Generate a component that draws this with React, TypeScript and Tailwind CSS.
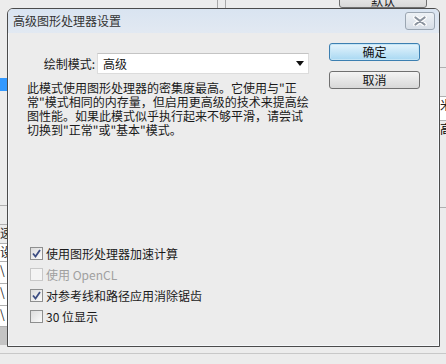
import React from 'react'

const FONT = { fontFamily: '"Noto Sans CJK SC", "Noto Sans", sans-serif' }

function Check({ checked, disabled }: { checked?: boolean; disabled?: boolean }) {
  return (
    <span
      className={
        'flex h-[13px] w-[13px] items-center justify-center border ' +
        (disabled
          ? 'border-[#c8c8c8] bg-[#f4f4f4]'
          : 'border-[#8e8f8f] bg-gradient-to-br from-[#dcdcdc] to-[#fbfbfb]')
      }
    >
      {checked && (
        <svg width="9" height="9" viewBox="0 0 9 9">
          <path d="M1 4.5 L3.5 7.5 L8 1" fill="none" stroke="#3c4d82" strokeWidth="1.8" />
        </svg>
      )}
    </span>
  )
}

function Row({ label, checked, disabled }: { label: string; checked?: boolean; disabled?: boolean }) {
  return (
    <div className="flex h-[21px] items-center gap-[3px]">
      <Check checked={checked} disabled={disabled} />
      <span className={'text-[12px] ' + (disabled ? 'text-[#a0a0a0]' : 'text-[#1a1a1a]')}>{label}</span>
    </div>
  )
}

// narrow cell of the panel table peeking out behind the dialog
function Cell({ h, text, white }: { h: string; text?: string; white?: boolean }) {
  return (
    <div
      className={
        h + ' overflow-hidden border-b border-[#b0b0b0] text-[12px] leading-[16px] text-[#222] ' + (white ? 'bg-white' : '')
      }
    >
      {text}
    </div>
  )
}

export default function App() {
  return (
    <div className="relative h-[364px] w-[446px] overflow-hidden bg-[#ececec]" style={FONT}>
      {/* window behind the dialog */}
      <div className="absolute inset-x-0 top-0 flex h-[8px]">
        <div className="w-[217px]" />
        <div className="w-[9px] border-x border-[#a8a8a8]" />
        <div className="flex flex-1 items-end pl-[113px]">
          <div className="flex h-[18px] w-[88px] items-end justify-center overflow-hidden rounded-[3px] border border-[#707070] bg-gradient-to-b from-[#f2f2f2] to-[#d8d8d8] text-[12px] leading-[12px] text-[#222]">
            默认
          </div>
        </div>
      </div>
      <div className="absolute left-0 top-0 flex h-[354px] w-[7px] flex-col">
        <div className="h-[78px]" />
        <div className="h-[13px] bg-[#3399ff]" />
        <div className="h-[115px] border-b border-[#b0b0b0]" />
        <Cell h="h-[19px]" />
        <Cell h="h-[19px]" text="速" />
        <Cell h="h-[18px]" text="设" white />
        <Cell h="h-[22px]" text="\" white />
        <Cell h="h-[22px]" text="\" white />
        <Cell h="h-[21px]" text="\" white />
        <div className="h-[18px] bg-[#c4c4c4]" />
      </div>
      <div className="absolute right-0 top-0 flex h-[354px] w-[6px] flex-col">
        <div className="h-[68px] border-b border-[#b0b0b0]" />
        <Cell h="h-[29px]" />
        <Cell h="h-[24px]" text="米" white />
        <div className="h-[22px] overflow-hidden text-[12px] leading-[16px]">高</div>
        <div className="h-[65px] border-b border-[#b0b0b0]" />
      </div>
      <div className="absolute inset-x-0 top-[353px] h-px bg-[#c8c8c8]" />

      {/* dialog window */}
      <div className="absolute left-[7px] top-[8px] flex h-[339px] w-[433px] flex-col rounded-t-[6px] border border-[#4b4b4b] bg-[#ececec] shadow-[0_0_0_1px_#f6f8fb_inset]">
        <div className="flex h-[24px] items-center justify-between rounded-t-[5px] bg-gradient-to-b from-[#d9e4f1] to-[#e2e9f2] pl-[5px] pr-[4px]">
          <span className="text-[12px] text-[#333]">高级图形处理器设置</span>
          <span className="flex h-[18px] w-[30px] items-center justify-center rounded-[3px] border border-[#9ba6b2] bg-gradient-to-b from-[#eef2f6] to-[#d7dee7]">
            <svg width="14" height="10" viewBox="0 0 14 10">
              <path d="M2.5 1.5 L11.5 8.5 M11.5 1.5 L2.5 8.5" stroke="#ffffff" strokeWidth="4.5" strokeLinecap="round" />
              <path d="M2.5 1.5 L11.5 8.5 M11.5 1.5 L2.5 8.5" stroke="#8a939e" strokeWidth="2.2" strokeLinecap="round" />
            </svg>
          </span>
        </div>

        <div className="flex flex-1 flex-col px-[19px]">
          <div className="flex">
            <div className="flex flex-1 flex-col">
              <div className="mt-[20px] flex items-center">
                <span className="w-[70px] pr-[2px] text-right text-[12px] text-[#1a1a1a]">绘制模式:</span>
                <div className="flex h-[21px] w-[212px] items-center justify-between border border-[#dcdcdc] border-t-[#c4c4c4] bg-white pl-[5px] pr-[4px]">
                  <span className="text-[12px] text-[#1a1a1a]">高级</span>
                  <svg width="8" height="5" viewBox="0 0 8 5">
                    <path d="M0 0 L8 0 L4 5 Z" fill="#111" />
                  </svg>
                </div>
              </div>
              <p className="mt-[7px] text-[12px] leading-[14px] text-[#1a1a1a]">
                此模式使用图形处理器的密集度最高。它使用与"正<br />
                常"模式相同的内存量，但启用更高级的技术来提高绘<br />
                图性能。如果此模式似乎执行起来不够平滑，请尝试<br />
                切换到"正常"或"基本"模式。
              </p>
            </div>
            <div className="mt-[10px] flex w-[91px] flex-col gap-[10px]">
              <button className="h-[18px] rounded-[3px] border border-[#3c7fb1] bg-gradient-to-b from-[#e5f4fc] to-[#a8d8f2] text-[12px] leading-[14px] text-[#111] shadow-[inset_0_0_0_1px_#c4e5f6]">
                确定
              </button>
              <button className="h-[18px] rounded-[3px] border border-[#707070] bg-gradient-to-b from-[#f4f4f4] to-[#d8d8d8] text-[12px] leading-[14px] text-[#111]">
                取消
              </button>
            </div>
          </div>

          <div className="mt-auto mb-[19px] flex flex-col pl-[3px]">
            <Row label="使用图形处理器加速计算" checked />
            <Row label="使用 OpenCL" disabled />
            <Row label="对参考线和路径应用消除锯齿" checked />
            <Row label="30 位显示" />
          </div>
        </div>
      </div>
    </div>
  )
}
